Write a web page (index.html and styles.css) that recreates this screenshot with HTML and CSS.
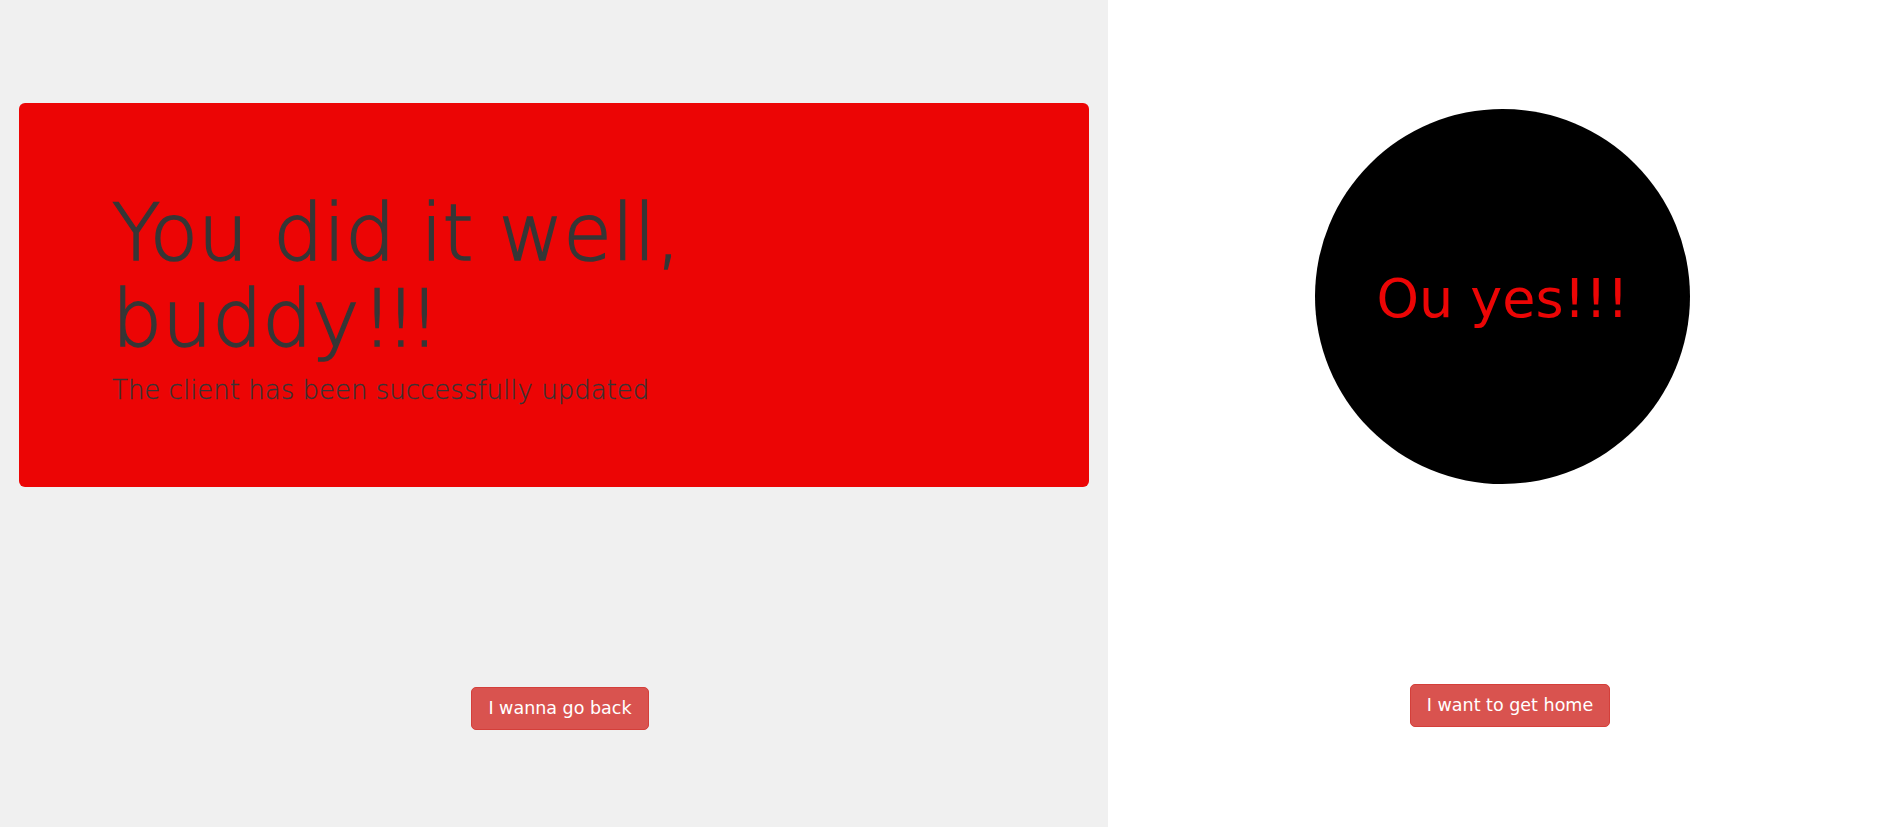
FILE: index.html
```html
<!DOCTYPE html>
<html lang="en">
<head>
<meta charset="utf-8">
<title>Updated</title>
<link rel="stylesheet" href="styles.css">
</head>
<body>
<div class="page">
  <section class="left">
    <div class="jumbo">
      <h1 class="title">You did it well,<br>buddy<span class="bang">!!!</span></h1>
      <p class="subtitle">The client has been successfully updated</p>
    </div>
    <div class="actions actions-left">
      <button class="btn">I wanna go back</button>
    </div>
  </section>
  <section class="right">
    <div class="circle-wrap">
      <div class="circle"><span class="circle-text">Ou yes!!!</span></div>
    </div>
    <div class="actions actions-right">
      <button class="btn">I want to get home</button>
    </div>
  </section>
</div>
</body>
</html>
```

FILE: styles.css
```css
html, body {
  margin: 0;
  padding: 0;
  height: 100%;
}
body {
  font-family: "DejaVu Sans", "Liberation Sans", sans-serif;
  background: #ffffff;
}
.page {
  display: flex;
  height: 827px;
}
.left {
  width: 1108px;
  flex: 0 0 1108px;
  background: #f0f0f0;
  display: flex;
  flex-direction: column;
}
.jumbo {
  margin: 103px 19px 0 19px;
  background: #ec0505;
  border-radius: 6px;
  padding: 87px 40px 81px 93px;
  color: #363636;
}
.title {
  margin: 0;
  font-size: 79px;
  font-weight: 300;
  line-height: 86px;
  -webkit-text-stroke: 1.6px #363636;
}
.bang {
  letter-spacing: -8px;
  margin-left: 2px;
}
.subtitle {
  margin: 13px 0 0 0;
  font-size: 26px;
  line-height: 31px;
  font-weight: 300;
  -webkit-text-stroke: 0.3px #363636;
}
.actions {
  display: flex;
  justify-content: center;
}
.actions-left {
  margin-top: 200px;
  padding-left: 12px;
}
.right {
  flex: 1;
  display: flex;
  flex-direction: column;
  background: #ffffff;
}
.circle-wrap {
  display: flex;
  justify-content: center;
  margin-top: 109px;
  padding-left: 1px;
}
.circle {
  width: 375px;
  height: 375px;
  border-radius: 50%;
  background: #000000;
  display: flex;
  align-items: center;
  justify-content: center;
}
.circle-text {
  color: #ec0505;
  font-size: 54px;
  padding-top: 4px;
}
.actions-right {
  margin-top: 200px;
  padding-left: 16px;
}
.btn {
  font-family: "DejaVu Sans", "Liberation Sans", sans-serif;
  font-size: 17.5px;
  line-height: 21px;
  padding: 10px 16px;
  color: #ffffff;
  background: #d9534f;
  border: 1px solid #d43f3a;
  border-radius: 5px;
  cursor: pointer;
}
```
